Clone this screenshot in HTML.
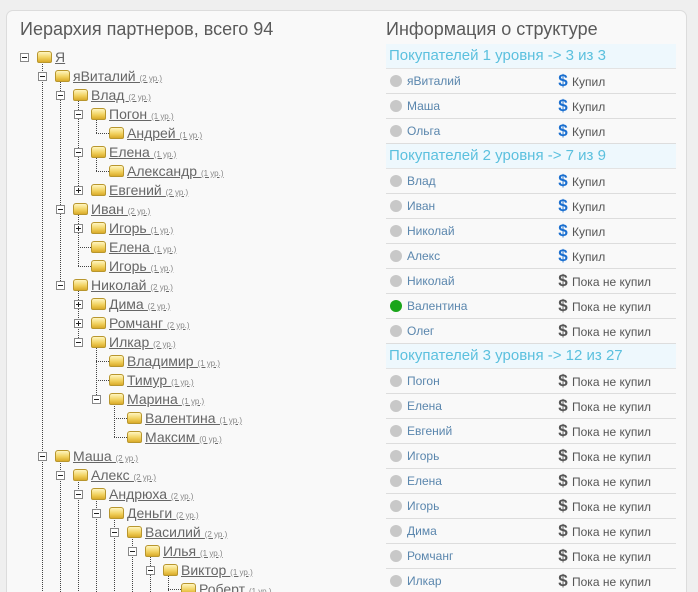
<!DOCTYPE html>
<html><head><meta charset="utf-8"><style>
*{margin:0;padding:0;box-sizing:border-box}
html,body{width:698px;height:592px;overflow:hidden}
body{background:#efefef;font-family:"Liberation Sans",Arial,sans-serif;position:relative}
.panel{position:absolute;left:6px;top:10px;width:681px;height:600px;background:#f9f9f9;border:1px solid #dcdcdc;border-radius:7px}
.t{position:absolute;font-size:18px;color:#5a5a5a;top:19px}
.v{position:absolute;border-left:1px dotted #444;width:0}
.h{position:absolute;border-top:1px dotted #444;height:0}
.b{position:absolute;width:9px;height:9px;border:1px solid #888;background:#fff;font-size:0}
.b:before{content:"";position:absolute;left:1px;top:3px;width:5px;height:1px;background:#222}
.p:after{content:"";position:absolute;left:3px;top:1px;width:1px;height:5px;background:#222}
.f{position:absolute;width:15px;height:12px;border:1px solid #b8962e;border-radius:3px 3px 2px 2px;background:linear-gradient(#fff6c0,#f0cf5a 60%,#d9ab2a)}
.n{position:absolute;font-size:14px;color:#666;text-decoration:underline;line-height:18px;white-space:nowrap}
.n small{font-size:8px;color:#888}
.tb{position:absolute;left:386px;top:44px;width:290px;font-size:12px}
.r{height:25px;border-bottom:1px solid #ddd;line-height:24px;white-space:nowrap;position:relative}
.hd{background:#eef8fd;color:#5bc0de;font-size:15px;padding-left:3px;border-bottom:1px solid #e3e3e3}
.d{display:inline-block;width:12px;height:12px;border-radius:50%;background:#c8c8c8;vertical-align:middle;margin:-2px 5px 0 4px}
.g{background:#1aa51a}
.nm{color:#5a86ad}
.s{position:absolute;left:168px;top:0;color:#555}
.s b{display:inline-block;width:18px;font-size:17px;color:#1a6fd0;font-weight:bold;text-align:center}
.s b.x{color:#555}
</style></head><body>
<div class="panel"></div>
<div class="t" style="left:20px">Иерархия партнеров, всего 94</div>
<div class="t" style="left:386px">Информация о структуре</div>

<div class="v" style="left:42px;top:57px;height:540px"></div>
<div class="v" style="left:60px;top:76px;height:209px"></div>
<div class="v" style="left:78px;top:95px;height:95px"></div>
<div class="v" style="left:96px;top:114px;height:19px"></div>
<div class="v" style="left:96px;top:152px;height:19px"></div>
<div class="v" style="left:78px;top:209px;height:57px"></div>
<div class="v" style="left:78px;top:285px;height:57px"></div>
<div class="v" style="left:96px;top:342px;height:57px"></div>
<div class="v" style="left:114px;top:399px;height:38px"></div>
<div class="v" style="left:60px;top:456px;height:140px"></div>
<div class="v" style="left:78px;top:475px;height:120px"></div>
<div class="v" style="left:96px;top:494px;height:100px"></div>
<div class="v" style="left:114px;top:513px;height:80px"></div>
<div class="v" style="left:132px;top:532px;height:60px"></div>
<div class="v" style="left:150px;top:551px;height:45px"></div>
<div class="v" style="left:168px;top:570px;height:25px"></div>
<div class="h" style="left:96px;top:133px;width:13px"></div>
<div class="h" style="left:96px;top:171px;width:13px"></div>
<div class="h" style="left:78px;top:247px;width:13px"></div>
<div class="h" style="left:78px;top:266px;width:13px"></div>
<div class="h" style="left:96px;top:361px;width:13px"></div>
<div class="h" style="left:96px;top:380px;width:13px"></div>
<div class="h" style="left:114px;top:418px;width:13px"></div>
<div class="h" style="left:114px;top:437px;width:13px"></div>
<div class="h" style="left:168px;top:589px;width:13px"></div>

<div class="b" style="left:20px;top:53px"></div><div class="f" style="left:37px;top:51px"></div><div class="n" style="left:55px;top:48px">Я</div>
<div class="b" style="left:38px;top:72px"></div><div class="f" style="left:55px;top:70px"></div><div class="n" style="left:73px;top:67px">яВиталий <small>(2 ур.)</small></div>
<div class="b" style="left:56px;top:91px"></div><div class="f" style="left:73px;top:89px"></div><div class="n" style="left:91px;top:86px">Влад <small>(2 ур.)</small></div>
<div class="b" style="left:74px;top:110px"></div><div class="f" style="left:91px;top:108px"></div><div class="n" style="left:109px;top:105px">Погон <small>(1 ур.)</small></div>
<div class="f" style="left:109px;top:127px"></div><div class="n" style="left:127px;top:124px">Андрей <small>(1 ур.)</small></div>
<div class="b" style="left:74px;top:148px"></div><div class="f" style="left:91px;top:146px"></div><div class="n" style="left:109px;top:143px">Елена <small>(1 ур.)</small></div>
<div class="f" style="left:109px;top:165px"></div><div class="n" style="left:127px;top:162px">Александр <small>(1 ур.)</small></div>
<div class="b p" style="left:74px;top:186px"></div><div class="f" style="left:91px;top:184px"></div><div class="n" style="left:109px;top:181px">Евгений <small>(2 ур.)</small></div>
<div class="b" style="left:56px;top:205px"></div><div class="f" style="left:73px;top:203px"></div><div class="n" style="left:91px;top:200px">Иван <small>(2 ур.)</small></div>
<div class="b p" style="left:74px;top:224px"></div><div class="f" style="left:91px;top:222px"></div><div class="n" style="left:109px;top:219px">Игорь <small>(1 ур.)</small></div>
<div class="f" style="left:91px;top:241px"></div><div class="n" style="left:109px;top:238px">Елена <small>(1 ур.)</small></div>
<div class="f" style="left:91px;top:260px"></div><div class="n" style="left:109px;top:257px">Игорь <small>(1 ур.)</small></div>
<div class="b" style="left:56px;top:281px"></div><div class="f" style="left:73px;top:279px"></div><div class="n" style="left:91px;top:276px">Николай <small>(2 ур.)</small></div>
<div class="b p" style="left:74px;top:300px"></div><div class="f" style="left:91px;top:298px"></div><div class="n" style="left:109px;top:295px">Дима <small>(2 ур.)</small></div>
<div class="b p" style="left:74px;top:319px"></div><div class="f" style="left:91px;top:317px"></div><div class="n" style="left:109px;top:314px">Ромчанг <small>(2 ур.)</small></div>
<div class="b" style="left:74px;top:338px"></div><div class="f" style="left:91px;top:336px"></div><div class="n" style="left:109px;top:333px">Илкар <small>(2 ур.)</small></div>
<div class="f" style="left:109px;top:355px"></div><div class="n" style="left:127px;top:352px">Владимир <small>(1 ур.)</small></div>
<div class="f" style="left:109px;top:374px"></div><div class="n" style="left:127px;top:371px">Тимур <small>(1 ур.)</small></div>
<div class="b" style="left:92px;top:395px"></div><div class="f" style="left:109px;top:393px"></div><div class="n" style="left:127px;top:390px">Марина <small>(1 ур.)</small></div>
<div class="f" style="left:127px;top:412px"></div><div class="n" style="left:145px;top:409px">Валентина <small>(1 ур.)</small></div>
<div class="f" style="left:127px;top:431px"></div><div class="n" style="left:145px;top:428px">Максим <small>(0 ур.)</small></div>
<div class="b" style="left:38px;top:452px"></div><div class="f" style="left:55px;top:450px"></div><div class="n" style="left:73px;top:447px">Маша <small>(2 ур.)</small></div>
<div class="b" style="left:56px;top:471px"></div><div class="f" style="left:73px;top:469px"></div><div class="n" style="left:91px;top:466px">Алекс <small>(2 ур.)</small></div>
<div class="b" style="left:74px;top:490px"></div><div class="f" style="left:91px;top:488px"></div><div class="n" style="left:109px;top:485px">Андрюха <small>(2 ур.)</small></div>
<div class="b" style="left:92px;top:509px"></div><div class="f" style="left:109px;top:507px"></div><div class="n" style="left:127px;top:504px">Деньги <small>(2 ур.)</small></div>
<div class="b" style="left:110px;top:528px"></div><div class="f" style="left:127px;top:526px"></div><div class="n" style="left:145px;top:523px">Василий <small>(2 ур.)</small></div>
<div class="b" style="left:128px;top:547px"></div><div class="f" style="left:145px;top:545px"></div><div class="n" style="left:163px;top:542px">Илья <small>(1 ур.)</small></div>
<div class="b" style="left:146px;top:566px"></div><div class="f" style="left:163px;top:564px"></div><div class="n" style="left:181px;top:561px">Виктор <small>(1 ур.)</small></div>
<div class="f" style="left:181px;top:583px"></div><div class="n" style="left:199px;top:580px">Роберт <small>(1 ур.)</small></div>

<div class="tb">
<div class="r hd">Покупателей 1 уровня -&gt; 3 из 3</div>
<div class="r nm"><span class="d"></span>яВиталий<span class="s"><b>$</b>Купил</span></div>
<div class="r nm"><span class="d"></span>Маша<span class="s"><b>$</b>Купил</span></div>
<div class="r nm"><span class="d"></span>Ольга<span class="s"><b>$</b>Купил</span></div>
<div class="r hd">Покупателей 2 уровня -&gt; 7 из 9</div>
<div class="r nm"><span class="d"></span>Влад<span class="s"><b>$</b>Купил</span></div>
<div class="r nm"><span class="d"></span>Иван<span class="s"><b>$</b>Купил</span></div>
<div class="r nm"><span class="d"></span>Николай<span class="s"><b>$</b>Купил</span></div>
<div class="r nm"><span class="d"></span>Алекс<span class="s"><b>$</b>Купил</span></div>
<div class="r nm"><span class="d"></span>Николай<span class="s"><b class="x">$</b>Пока не купил</span></div>
<div class="r nm"><span class="d g"></span>Валентина<span class="s"><b class="x">$</b>Пока не купил</span></div>
<div class="r nm"><span class="d"></span>Олег<span class="s"><b class="x">$</b>Пока не купил</span></div>
<div class="r hd">Покупателей 3 уровня -&gt; 12 из 27</div>
<div class="r nm"><span class="d"></span>Погон<span class="s"><b class="x">$</b>Пока не купил</span></div>
<div class="r nm"><span class="d"></span>Елена<span class="s"><b class="x">$</b>Пока не купил</span></div>
<div class="r nm"><span class="d"></span>Евгений<span class="s"><b class="x">$</b>Пока не купил</span></div>
<div class="r nm"><span class="d"></span>Игорь<span class="s"><b class="x">$</b>Пока не купил</span></div>
<div class="r nm"><span class="d"></span>Елена<span class="s"><b class="x">$</b>Пока не купил</span></div>
<div class="r nm"><span class="d"></span>Игорь<span class="s"><b class="x">$</b>Пока не купил</span></div>
<div class="r nm"><span class="d"></span>Дима<span class="s"><b class="x">$</b>Пока не купил</span></div>
<div class="r nm"><span class="d"></span>Ромчанг<span class="s"><b class="x">$</b>Пока не купил</span></div>
<div class="r nm"><span class="d"></span>Илкар<span class="s"><b class="x">$</b>Пока не купил</span></div>
</div>
</body></html>
